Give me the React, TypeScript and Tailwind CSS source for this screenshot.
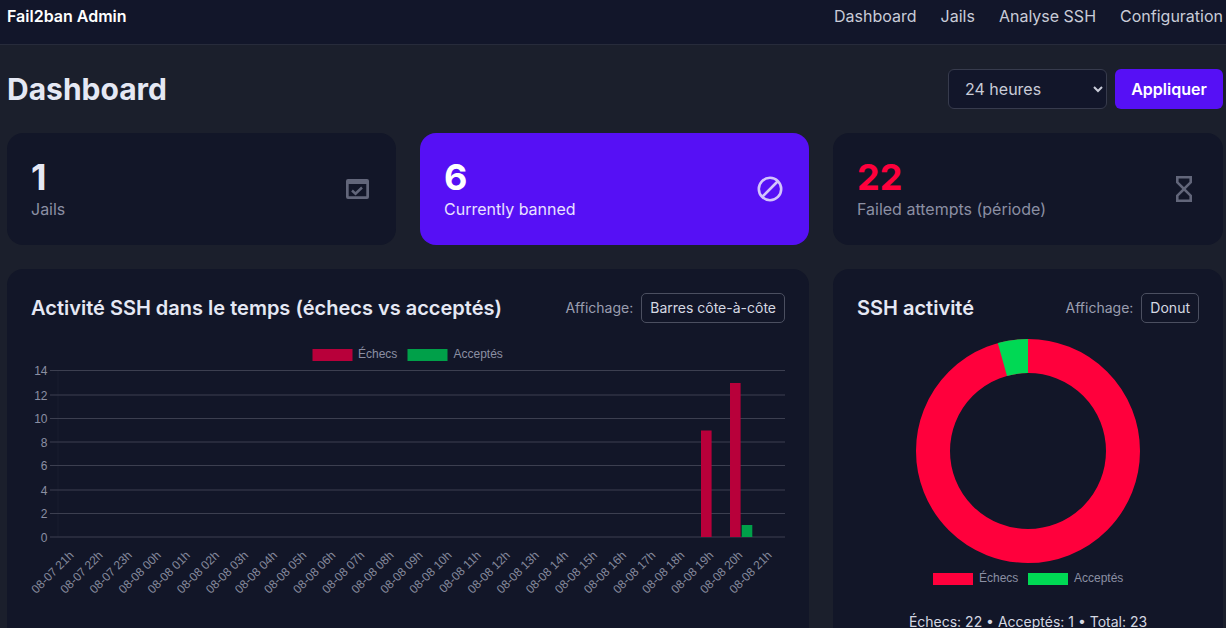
const hours = [
  "08-07 21h", "08-07 22h", "08-07 23h", "08-08 00h", "08-08 01h", "08-08 02h", "08-08 03h", "08-08 04h", "08-08 05h",
  "08-08 06h", "08-08 07h", "08-08 08h", "08-08 09h", "08-08 10h", "08-08 11h", "08-08 12h", "08-08 13h", "08-08 14h",
  "08-08 15h", "08-08 16h", "08-08 17h", "08-08 18h", "08-08 19h", "08-08 20h", "08-08 21h",
];
const ticks = [
  { label: "14", y: 370.5 },
  { label: "12", y: 395 },
  { label: "10", y: 418.5 },
  { label: "8", y: 442 },
  { label: "6", y: 465.5 },
  { label: "4", y: 490 },
  { label: "2", y: 513.5 },
  { label: "0", y: 537 },
];

function StatCard({ value, label, tone, children }: { value: string; label: string; tone: string; children: React.ReactNode }) {
  const isBan = tone === "ban";
  return (
    <div className={`flex items-center justify-between rounded-2xl p-6 ${isBan ? "bg-[#5610f5]" : "bg-[#121628]"}`}>
      <div>
        <div className={`text-4xl leading-10 font-bold ${isBan ? "text-white" : tone === "fail" ? "text-[#ff003c]" : "text-[#e5e8f4]"}`}>{value}</div>
        <div className={`text-base leading-6 ${isBan ? "text-[#e9e2ff]" : "text-[#8b8fa3]"}`}>{label}</div>
      </div>
      <div className="flex w-[30px] justify-center">{children}</div>
    </div>
  );
}

function ViewControl({ value }: { value: string }) {
  return (
    <div className="flex items-center gap-2 text-sm">
      <span className="text-[#9a9eb0]">Affichage:</span>
      <span className="flex h-[30px] items-center rounded-[5px] border border-[#4b4f60] px-2 text-[#d5d8e2]">{value}</span>
    </div>
  );
}

function BarChart() {
  return (
    <svg viewBox="31 345 754 270" className="mt-[22px] block h-[270px] w-full" fontFamily="'Liberation Sans', Arial, sans-serif" fontSize="12">
      <rect x="312.5" y="349" width="40" height="12" fill="#b8003a" />
      <text x="358" y="358" fill="#8b8fa3">Échecs</text>
      <rect x="407.5" y="349" width="40" height="12" fill="#00a049" />
      <text x="453.5" y="358" fill="#8b8fa3">Acceptés</text>
      <line x1="58" x2="58" y1="370" y2="537" stroke="#191c2e" />
      {ticks.map((t) => (
        <g key={t.label}>
          <line x1="50" x2="785" y1={t.y} y2={t.y} stroke="#3c3f50" strokeWidth="1" />
          <text x="47.5" y={t.y + 4.5} textAnchor="end" fill="#8b8fa3">{t.label}</text>
        </g>
      ))}
      {hours.map((h, i) => {
        const x = 72.5 + i * 29.08;
        return (
          <text key={h} x={x + 2} y={556} textAnchor="end" fill="#85899c" transform={`rotate(-45 ${x + 2} 556)`}>{h}</text>
        );
      })}
      <rect x="701" y="430.5" width="10.6" height="106.5" fill="#b8003a" />
      <rect x="730" y="383" width="10.6" height="154" fill="#b8003a" />
      <rect x="741.7" y="525" width="10.6" height="12" fill="#00a049" />
    </svg>
  );
}

function Donut() {
  return (
    <svg viewBox="857 335 342 260" className="mt-3 block h-[260px] w-full" fontFamily="'Liberation Sans', Arial, sans-serif" fontSize="12">
      <circle cx="1028" cy="451" r="95" fill="none" stroke="#ff003c" strokeWidth="34" />
      <path d="M1028 339 A112 112 0 0 0 997.8 343.1 L1007 375.9 A78 78 0 0 1 1028 373 Z" fill="#00d954" />
      <rect x="933" y="573" width="40" height="12" fill="#ff003c" />
      <text x="979" y="582" fill="#8b8fa3">Échecs</text>
      <rect x="1028" y="573" width="40" height="12" fill="#00d954" />
      <text x="1074" y="582" fill="#8b8fa3">Acceptés</text>
    </svg>
  );
}

export default function App() {
  return (
    <div className="h-[628px] overflow-hidden bg-[#1b1f2c] font-['Inter',sans-serif] text-[#e5e8f4]">
      <nav className="flex h-[45px] items-start justify-between border-b border-[#272b3b] bg-[#12162a] pt-1 pr-[3px] pl-[7px]">
        <span className="text-base leading-6 font-semibold text-white">Fail2ban Admin</span>
        <div className="flex gap-6 text-base leading-6 text-[#c9ccd8]">
          <span>Dashboard</span>
          <span>Jails</span>
          <span>Analyse SSH</span>
          <span>Configuration</span>
        </div>
      </nav>
      <main className="pt-6 pr-[3px] pl-[7px]">
        <div className="flex h-10 items-center justify-between">
          <h1 className="text-3xl font-bold">Dashboard</h1>
          <div className="flex gap-2">
            <select defaultValue="24" className="h-10 w-[159px] rounded-md border border-[#373b4d] bg-[#12162a] px-3 text-base text-[#c9ccd8]">
              <option value="24">24 heures</option>
            </select>
            <button className="h-10 w-[108px] rounded-md bg-[#5610f5] text-base font-semibold text-white">Appliquer</button>
          </div>
        </div>
        <div className="mt-6 grid grid-cols-[389px_389px_1fr] gap-6">
          <StatCard value="1" label="Jails" tone="plain">
            <svg width="23" height="20" viewBox="0 0 23 20" className="text-[#62667a]">
              <path fillRule="evenodd" fill="currentColor" d="M2 0h19a2 2 0 0 1 2 2v16a2 2 0 0 1-2 2H2a2 2 0 0 1-2-2V2a2 2 0 0 1 2-2zM2.7 5v12.3h17.6V5z" />
              <path d="M6 11.5l3.5 3.2 6.5-6.2" fill="none" stroke="currentColor" strokeWidth="2.5" />
            </svg>
          </StatCard>
          <StatCard value="6" label="Currently banned" tone="ban">
            <svg width="26" height="26" viewBox="0 0 26 26" fill="none" stroke="#d3c4fc" strokeWidth="2.6">
              <circle cx="13" cy="13" r="11.2" />
              <path d="M5 21L21 5" />
            </svg>
          </StatCard>
          <StatCard value="22" label="Failed attempts (période)" tone="fail">
            <svg width="16" height="26" viewBox="0 0 16 26" fill="none" stroke="#62667a" strokeWidth="2.6">
              <path d="M1.3 1.3h13.4v5L8 13 1.3 6.3z" />
              <path d="M1.3 24.7h13.4v-5L8 13l-6.7 6.7z" />
            </svg>
          </StatCard>
        </div>
        <div className="mt-6 grid grid-cols-[802px_1fr] gap-6">
          <section className="h-[400px] rounded-2xl bg-[#121628] p-6">
            <div className="flex h-[30px] items-center justify-between">
              <h2 className="text-xl font-semibold">Activité SSH dans le temps (échecs vs acceptés)</h2>
              <ViewControl value="Barres côte-à-côte" />
            </div>
            <BarChart />
          </section>
          <section className="h-[400px] rounded-2xl bg-[#121628] p-6">
            <div className="flex h-[30px] items-center justify-between">
              <h2 className="text-xl font-semibold">SSH activité</h2>
              <ViewControl value="Donut" />
            </div>
            <Donut />
            <p className="mt-[17px] text-center text-sm text-[#d5d8e2]">Échecs: 22 • Acceptés: 1 • Total: 23</p>
          </section>
        </div>
      </main>
    </div>
  );
}
